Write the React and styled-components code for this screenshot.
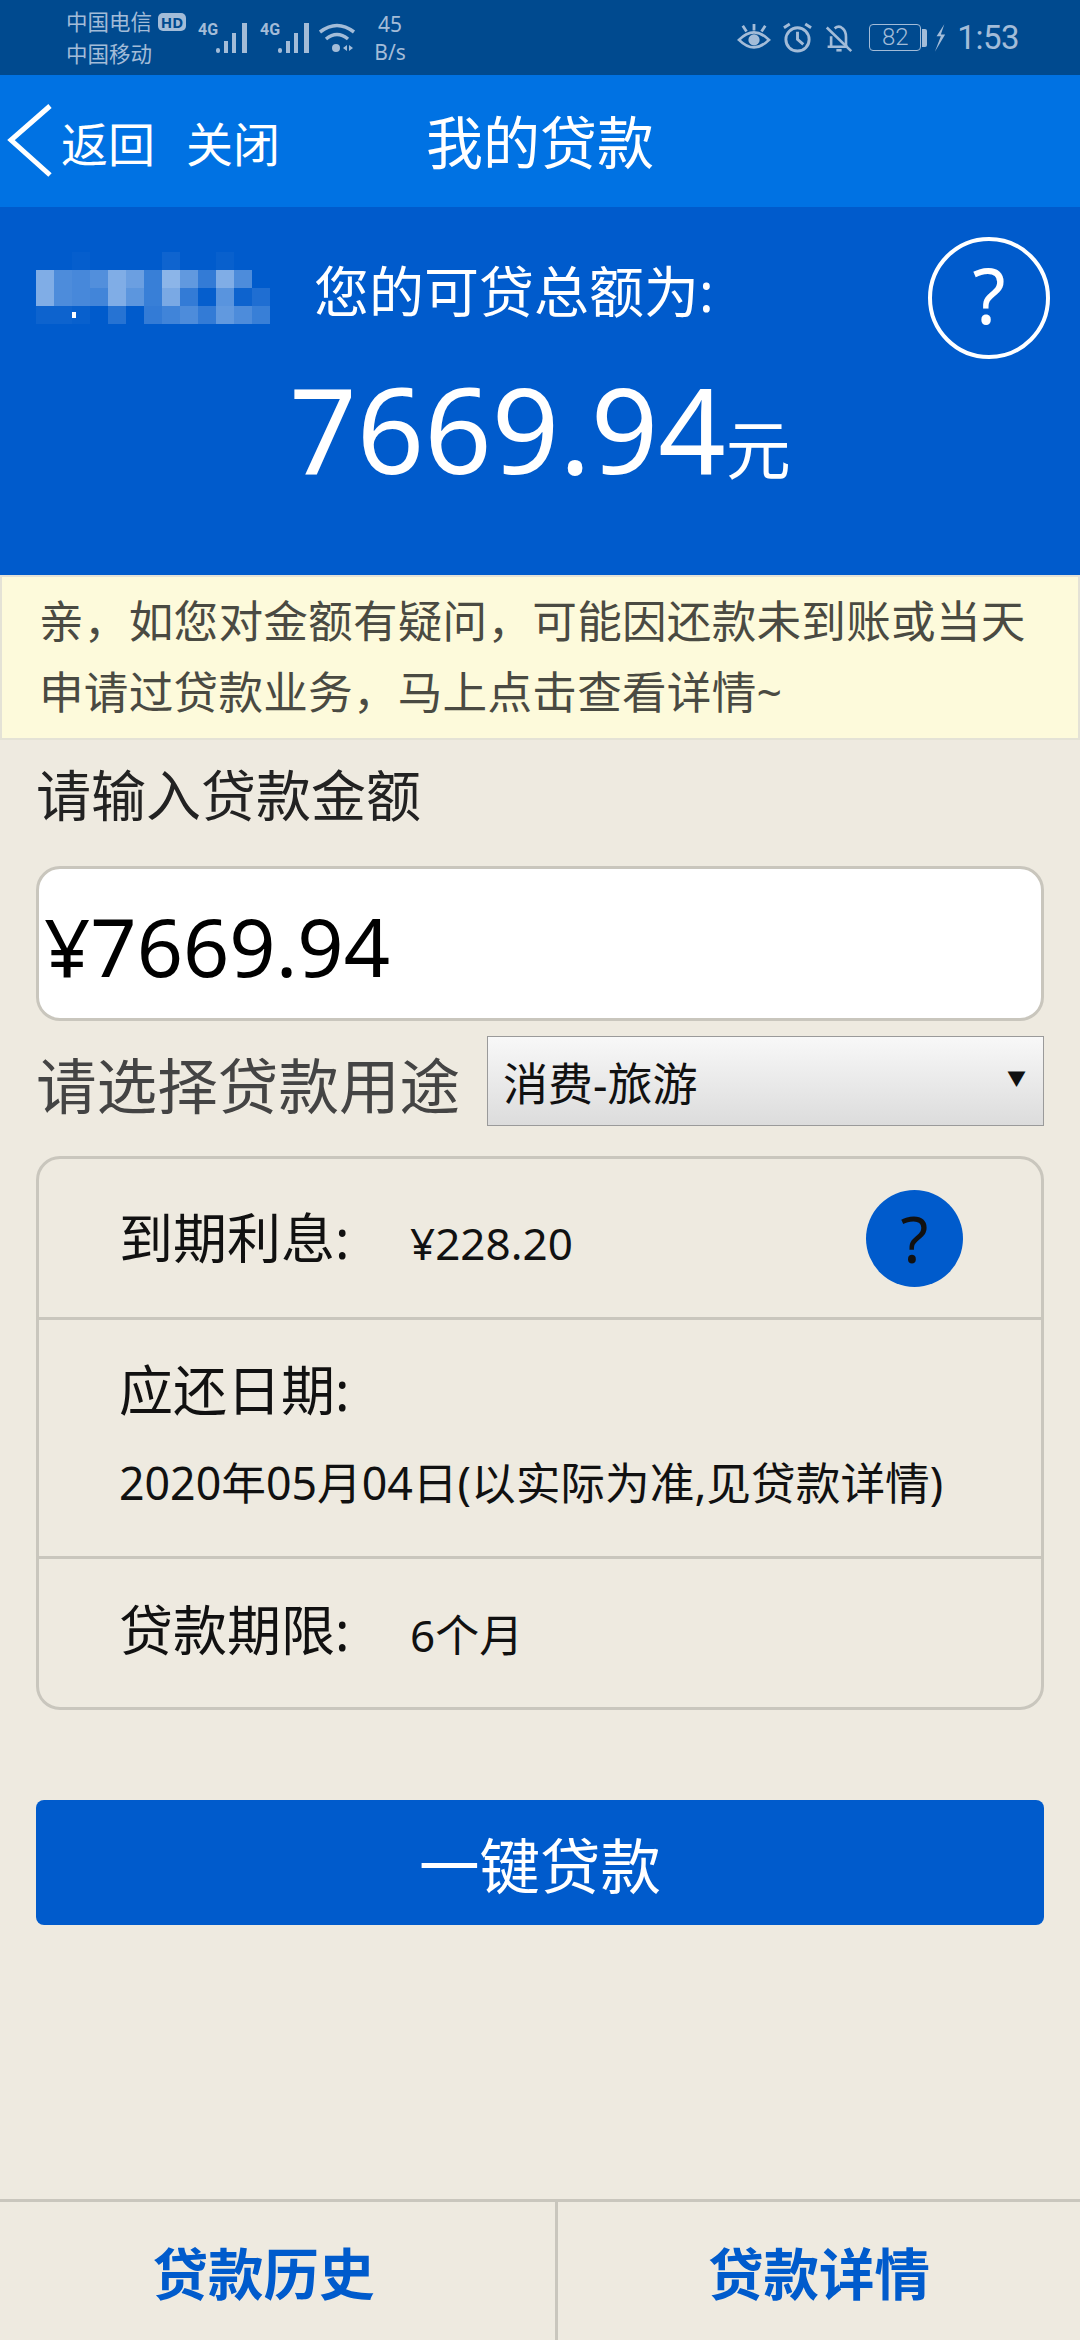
import React from "react";
import styled, { createGlobalStyle } from "styled-components";

const FONT = `"Noto Sans", "Noto Sans CJK SC", sans-serif`;

const GlobalStyle = createGlobalStyle`
  html, body {
    margin: 0;
    padding: 0;
    background: #eeeae0;
    font-family: ${FONT};
  }
  * { box-sizing: border-box; }
`;

const Page = styled.div`
  width: 1080px;
  height: 2340px;
  display: flex;
  flex-direction: column;
  background: #eeeae0;
  overflow: hidden;
`;

//STATUS BAR
const StatusBar = styled.div`
  height: 75px;
  flex: none;
  display: flex;
  align-items: center;
  justify-content: space-between;
  padding: 0 61px 0 66px;
  background: #004a8f;
  color: #a3bcd8;
`;
const StatusGroup = styled.div`
  display: flex;
  align-items: center;
`;
const Carriers = styled.div`
  font-size: 21.5px;
  line-height: 32px;
  width: 132px;
  flex: none;
  white-space: nowrap;
`;
const CarrierLine = styled.div`
  display: flex;
  align-items: center;
`;
const HdBadge = styled.span`
  width: 28px;
  height: 18px;
  margin-left: 6px;
  border-radius: 5px;
  background: #a3bcd8;
  color: #004a8f;
  font-size: 15px;
  font-weight: 700;
  line-height: 18px;
  text-align: center;
`;
const Speed = styled.div`
  font-size: 21px;
  line-height: 28px;
  text-align: center;
  margin-left: 16px;
  width: 36px;
  flex: none;
`;
const BatteryBox = styled.div`
  width: 52px;
  height: 27px;
  border: 1.5px solid #a3bcd8;
  border-radius: 4px;
  font-family: Roboto, sans-serif;
  font-weight: 300;
  font-size: 24px;
  line-height: 24px;
  text-align: center;
  margin-left: 16px;
`;
const BatteryNub = styled.div`
  width: 5px;
  height: 18px;
  margin-left: 1px;
  border-radius: 0 2px 2px 0;
  background: #a3bcd8;
`;
const Clock = styled.div`
  font-family: Roboto, sans-serif;
  font-size: 33px;
  letter-spacing: -0.5px;
  margin-left: 11px;
`;

//NAV
const Nav = styled.div`
  height: 132px;
  flex: none;
  position: relative;
  display: flex;
  align-items: center;
  background: #0072e3;
  color: #fff;
`;
const NavLink = styled.span`
  font-size: 47px;
  margin-left: ${(p) => p.$gap}px;
`;
const NavTitle = styled.div`
  position: absolute;
  left: 0;
  right: 0;
  top: 34px;
  text-align: center;
  font-size: 57px;
  line-height: 66px;
`;

//HERO
const Hero = styled.div`
  height: 368px;
  flex: none;
  background: #005bcc;
  color: #fff;
  padding: 30px 30px 0 36px;
`;
const HeroTop = styled.div`
  display: flex;
  align-items: flex-start;
`;
const HeroLabel = styled.div`
  font-size: 55px;
  line-height: 60px;
  margin: 24px 0 0 36px;
  flex: 1;
`;
const HelpOutline = styled.div`
  width: 122px;
  height: 122px;
  flex: none;
  padding-bottom: 8px;
  border: 4px solid #fff;
  border-radius: 50%;
  display: flex;
  align-items: center;
  justify-content: center;
  font-size: 76px;
`;
const Amount = styled.div`
  display: flex;
  align-items: baseline;
  justify-content: center;
  font-size: 118px;
  line-height: 140px;
  padding-right: 6px;
`;
const Unit = styled.span`
  font-size: 65px;
`;

//NOTICE
const Notice = styled.div`
  height: 165px;
  flex: none;
  padding: 8px 30px 0 37px;
  background: #fdfadb;
  border: 2px solid #e4e2d6;
  font-size: 44.6px;
  letter-spacing: 0.25px;
  line-height: 71px;
  color: #4a4a42;
`;

//FORM
const Form = styled.div`
  flex: 1;
  padding: 0 36px;
`;
const FormLabel = styled.div`
  font-size: 55px;
  line-height: 76px;
  margin-top: 17px;
  color: #222;
`;
const AmountInput = styled.div`
  height: 155px;
  margin-top: 33px;
  background: #fff;
  border: 3px solid #c9c6bd;
  border-radius: 24px;
  display: flex;
  align-items: center;
  padding: 4px 0 0 5px;
  font-size: 81px;
  color: #000;
`;
const PurposeRow = styled.div`
  display: flex;
  align-items: center;
  margin-top: 15px;
`;
const PurposeLabel = styled.div`
  width: 451px;
  height: 90px;
  flex: none;
  font-size: 60.6px;
  line-height: 90px;
  padding-top: 5px;
  white-space: nowrap;
  color: #444;
`;
const Select = styled.div`
  flex: 1;
  height: 90px;
  display: flex;
  align-items: center;
  justify-content: space-between;
  padding: 0 17px 0 15px;
  border: 1.5px solid #9a9a9a;
  background: linear-gradient(#f8f8f8, #dcdcdc);
  font-size: 45px;
  color: #111;
`;
const Caret = styled.span`
  font-size: 19px;
  margin-top: -6px;
`;
const InfoCard = styled.div`
  height: 554px;
  margin-top: 30px;
  border: 3px solid #c9c6bd;
  border-radius: 24px;
  display: flex;
  flex-direction: column;
`;
const InfoRow = styled.div`
  height: ${(p) => p.$h}px;
  flex: none;
  padding: 0 0 ${(p) => p.$lift || 0}px 80px;
  display: flex;
  align-items: center;
  border-top: ${(p) => (p.$first ? "none" : "3px solid #c9c6bd")};
  color: #111;
`;
const DateRow = styled(InfoRow)`
  flex-direction: column;
  align-items: flex-start;
  justify-content: center;
  gap: 28px;
  padding-bottom: 9px;
`;
const InfoName = styled.span`
  font-size: 54px;
  line-height: 70px;
  width: 291px;
  flex: none;
`;
const InfoValue = styled.span`
  font-size: 44px;
  line-height: 60px;
  padding-top: 10px;
`;
const DateValue = styled.span`
  font-size: 44.7px;
  line-height: 60px;
  white-space: nowrap;
`;
const HelpDot = styled.div`
  width: 97px;
  height: 97px;
  margin-left: auto;
  margin-right: 78px;
  border-radius: 50%;
  background: #005bcc;
  display: flex;
  align-items: center;
  justify-content: center;
  font-size: 64px;
  color: #111;
`;
const SubmitButton = styled.div`
  height: 125px;
  margin-top: 90px;
  background: #005bcc;
  border-radius: 8px;
  display: flex;
  align-items: center;
  justify-content: center;
  font-size: 60.5px;
  color: #fff;
`;

//FOOTER
const Footer = styled.div`
  height: 141px;
  flex: none;
  display: flex;
  border-top: 3px solid #c9c6bd;
`;
const FooterTab = styled.div`
  flex: none;
  width: ${(p) => p.$w}px;
  display: flex;
  align-items: center;
  justify-content: center;
  padding-right: ${(p) => p.$shift || 0}px;
  font-size: 55.5px;
  font-weight: 700;
  color: #005bcc;
  border-left: ${(p) => (p.$divider ? "3px solid #c9c6bd" : "none")};
`;

const BackIcon = () => (
  <svg width="61" height="132" viewBox="0 0 61 132" style={{ flex: "none" }}>
    <polyline points="50,31 11,65 50,100" fill="none" stroke="#fff" strokeWidth="5" />
  </svg>
);

const Bars = ({ gap }) => (
  <svg width="50" height="36" viewBox="0 0 50 36" style={{ flex: "none", marginLeft: gap }} fill="#a3bcd8">
    <text x="0" y="15" fontSize="16" fontWeight="700" fontFamily="Roboto">4G</text>
    <rect x="18" y="28" width="4" height="5" rx="2" />
    <rect x="26" y="21" width="4" height="12" />
    <rect x="34" y="13" width="4" height="20" />
    <rect x="44" y="3" width="5" height="30" />
  </svg>
);

const Wifi = () => (
  <svg width="37" height="32" viewBox="0 0 37 32" style={{ flex: "none", marginLeft: 9 }} fill="none" stroke="#a3bcd8" strokeWidth="3.5">
    <path d="M1 10 Q18 -3 35 10" />
    <path d="M7 17 Q18 8 29 17" />
    <circle cx="17" cy="26" r="4" fill="#a3bcd8" stroke="none" />
    <path d="M24 26l4-3v6zM30 23l4 3-4 3z" fill="#a3bcd8" stroke="none" />
  </svg>
);

const Eye = () => (
  <svg width="34" height="30" viewBox="0 0 36 32" style={{ flex: "none" }} fill="none" stroke="#a3bcd8" strokeWidth="3">
    <path d="M2 18 Q18 2 34 18 Q18 34 2 18 Z" />
    <circle cx="18" cy="18" r="6" fill="#a3bcd8" stroke="none" />
    <path d="M18 1V8M6 3l4 6M30 3l-4 6" />
  </svg>
);

const Alarm = () => (
  <svg width="31" height="31" viewBox="0 0 32 32" style={{ flex: "none", marginLeft: 11 }} fill="none" stroke="#a3bcd8" strokeWidth="3">
    <circle cx="16" cy="18" r="12" />
    <path d="M16 10v8l6 5M2 6l6-4M30 6l-6-4" />
  </svg>
);

const BellOff = () => (
  <svg width="28" height="32" viewBox="0 0 32 34" style={{ flex: "none", marginLeft: 12 }} fill="none" stroke="#a3bcd8" strokeWidth="3">
    <path d="M3 27h23M7 27V15M11 6q5-4 9 0 4 3 4 10v11" />
    <path d="M2 5l28 27" />
    <path d="M13 31h6" />
  </svg>
);

const Bolt = () => (
  <svg width="12" height="30" viewBox="0 0 14 32" style={{ flex: "none", marginLeft: 7 }} fill="#a3bcd8">
    <path d="M12 0 3 14h5L1 32 13 12H8z" />
  </svg>
);

// mosaic over the blurred-out customer name, 18px cells
const MOSAIC = [
  [0, 0, 0.02, 0, 0, 0, 0, 0.06, 0, 0, 0.03, 0, 0],
  [0.5, 0.3, 0.28, 0.32, 0.5, 0.42, 0.22, 0.55, 0.38, 0.2, 0.5, 0.3, 0],
  [0.5, 0.3, 0.28, 0.26, 0.5, 0.36, 0.22, 0.48, 0.2, 0.02, 0.35, 0.05, 0.12],
  [0.05, 0.05, 0.03, 0, 0.15, 0, 0.2, 0.25, 0.3, 0.2, 0.38, 0.3, 0.22],
];

const Mosaic = () => (
  <svg width="242" height="72" viewBox="0 0 242 72" style={{ flex: "none", marginTop: 15 }}>
    {MOSAIC.map((row, y) =>
      row.map((o, x) => <rect key={`${x}-${y}`} x={x * 18} y={y * 18} width="18" height="18" fill="#fff" opacity={o} />)
    )}
    <rect x="36" y="60" width="4" height="6" fill="#fff" />
  </svg>
);

const App = () => {
  return (
    <Page>
      <GlobalStyle />
      <StatusBar>
        <StatusGroup>
          <Carriers>
            <CarrierLine>
              中国电信<HdBadge>HD</HdBadge>
            </CarrierLine>
            <CarrierLine>中国移动</CarrierLine>
          </Carriers>
          <Bars gap={0} />
          <Bars gap={12} />
          <Wifi />
          <Speed>
            45
            <br />
            B/s
          </Speed>
        </StatusGroup>
        <StatusGroup>
          <Eye />
          <Alarm />
          <BellOff />
          <BatteryBox>82</BatteryBox>
          <BatteryNub />
          <Bolt />
          <Clock>1:53</Clock>
        </StatusGroup>
      </StatusBar>
      <Nav>
        <BackIcon />
        <NavLink $gap={0}>返回</NavLink>
        <NavLink $gap={31}>关闭</NavLink>
        <NavTitle>我的贷款</NavTitle>
      </Nav>
      <Hero>
        <HeroTop>
          <Mosaic />
          <HeroLabel>您的可贷总额为:</HeroLabel>
          <HelpOutline>?</HelpOutline>
        </HeroTop>
        <Amount>
          7669.94<Unit>元</Unit>
        </Amount>
      </Hero>
      <Notice>亲，如您对金额有疑问，可能因还款未到账或当天申请过贷款业务，马上点击查看详情~</Notice>
      <Form>
        <FormLabel>请输入贷款金额</FormLabel>
        <AmountInput>¥7669.94</AmountInput>
        <PurposeRow>
          <PurposeLabel>请选择贷款用途</PurposeLabel>
          <Select>
            消费-旅游
            <Caret>▼</Caret>
          </Select>
        </PurposeRow>
        <InfoCard>
          <InfoRow $first $h={158}>
            <InfoName>到期利息:</InfoName>
            <InfoValue>¥228.20</InfoValue>
            <HelpDot>?</HelpDot>
          </InfoRow>
          <DateRow $h={239}>
            <InfoName>应还日期:</InfoName>
            <DateValue>2020年05月04日(以实际为准,见贷款详情)</DateValue>
          </DateRow>
          <InfoRow $h={149} $lift={4}>
            <InfoName>贷款期限:</InfoName>
            <InfoValue>6个月</InfoValue>
          </InfoRow>
        </InfoCard>
        <SubmitButton>一键贷款</SubmitButton>
      </Form>
      <Footer>
        <FooterTab $w={555} $shift={28}>
          贷款历史
        </FooterTab>
        <FooterTab $w={525} $divider>
          贷款详情
        </FooterTab>
      </Footer>
    </Page>
  );
};

export default App;
